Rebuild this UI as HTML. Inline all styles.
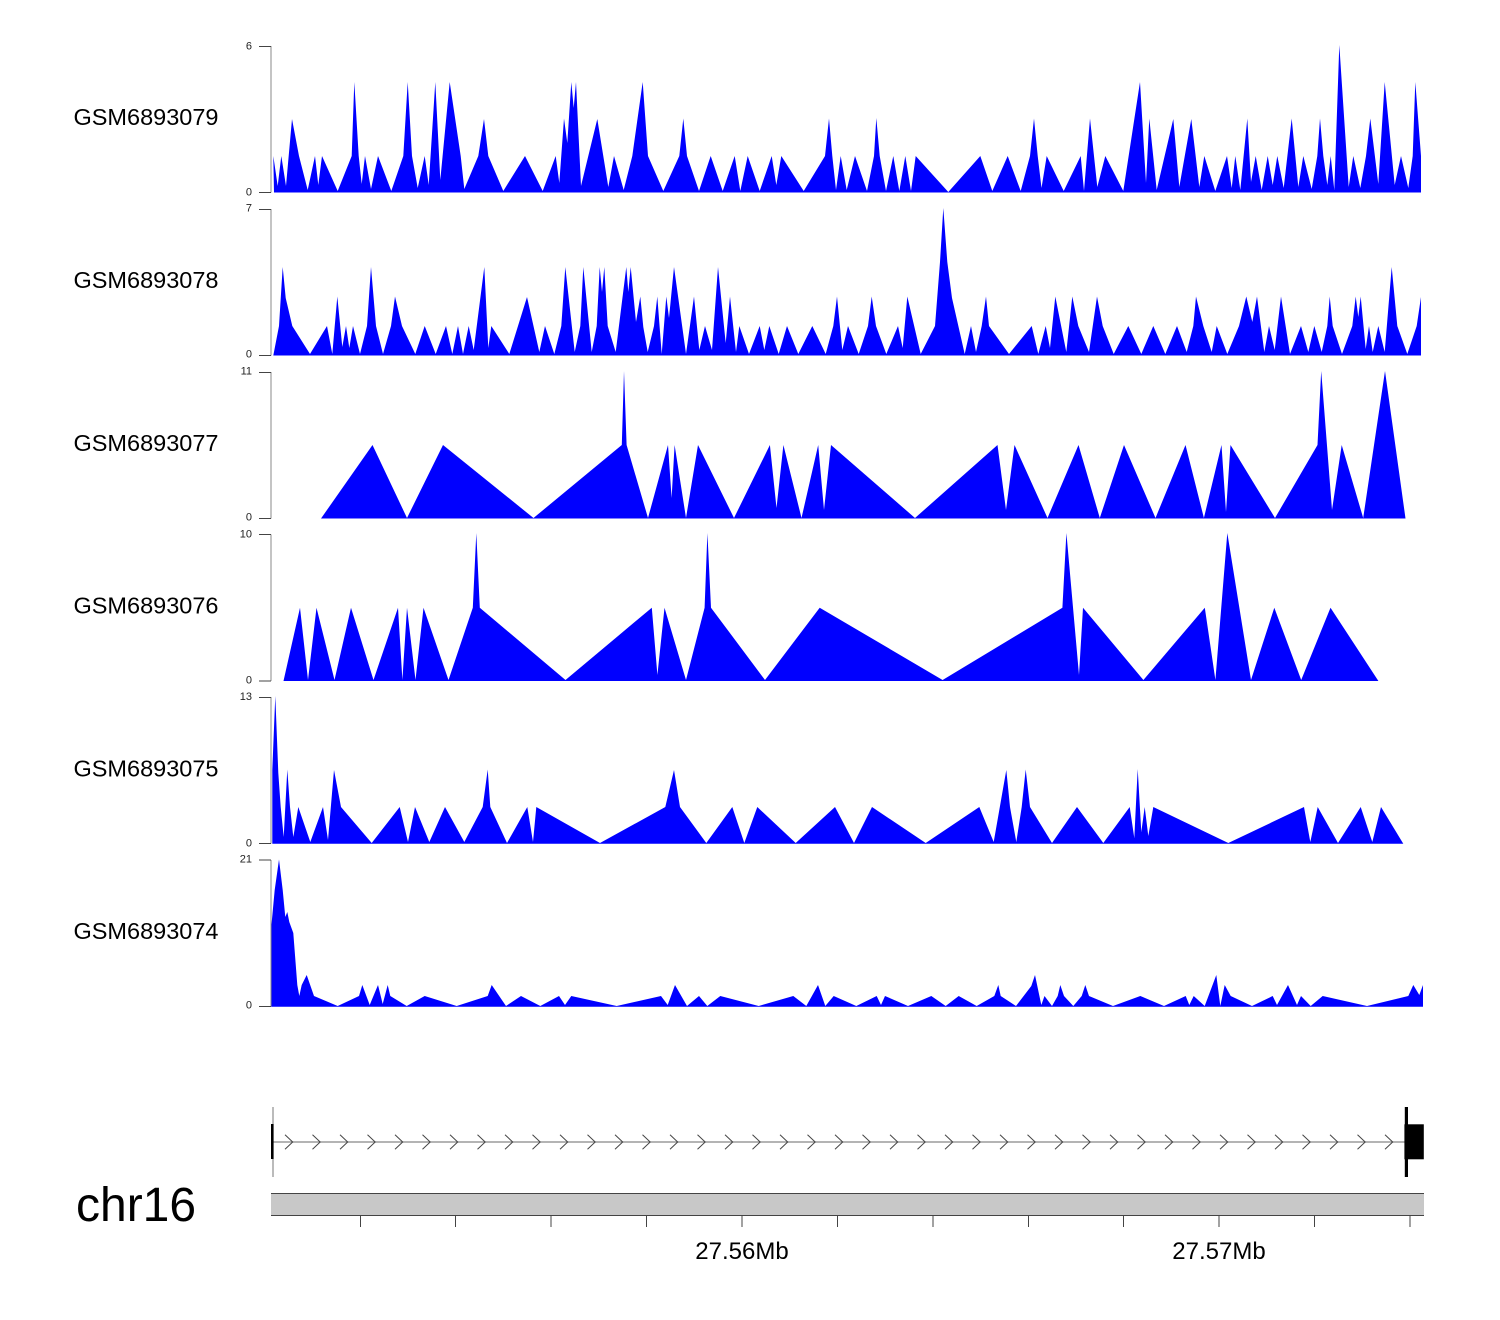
<!DOCTYPE html>
<html><head><meta charset="utf-8"><style>
html,body{margin:0;padding:0;background:#fff;width:1500px;height:1320px;overflow:hidden}
svg{display:block}
text{font-family:"Liberation Sans",Arial,sans-serif;fill:#000}
.s{font-size:11px;text-anchor:end;fill:#222}
.l{font-size:23.5px;text-anchor:end}
.a{font-size:24px;text-anchor:middle}
</style></head><body>
<svg width="1500" height="1320" viewBox="0 0 1500 1320" xmlns="http://www.w3.org/2000/svg">
<rect width="1500" height="1320" fill="#fff"/>
<g fill="#0000ff">
<polygon points="274,192.5 273.3,156 277.7,186 281.3,156 286,186 292,119 299,156 307.7,190 315,156 318.3,185 322,156 337.7,191 351.7,156 354.3,82 358.7,156 361.7,184 365,156 371,189 378,156 391.3,191 403.3,156 407.7,82 412,156 417.7,188 424.7,156 428.7,185 435.3,82 440.3,180 449.7,82 460.7,156 464.3,189 478.3,156 484,119 488.3,156 503.3,191 525,156 542.7,191 555.7,156 559.3,183 564,118.5 567.3,143 571.3,82 573.7,108 576,82 581,186 597.3,119 608.3,187 614,156 623.7,190 632.3,156 642.7,82 648,156 663.3,191 679.3,156 683.3,118.5 687,156 699,191 710.7,156 722.7,191 734.7,156 740.3,191 747.7,156 759.7,191 771.7,156 776.3,185 781.3,156 803.7,191 825,156 829,118.5 832.3,156 836,190 840.7,156 846.7,190 855,156 867,191 874,156 876.3,118 879.7,156 886,191 893.3,156 899.3,191 905.3,156 911,191 915.7,156 948.3,192 980.3,156 992.3,191 1007.7,156 1020.7,191 1030,156 1034,118.5 1037.7,156 1041.5,188 1046.7,156 1063.7,191 1080.7,156 1084,191 1090,118.5 1097.3,187 1105.3,156 1123.3,191 1140,82 1146,183 1149.3,118.5 1156.7,190 1173.3,119 1179.3,187 1191.3,119 1199.3,187 1204.3,156 1215.3,191 1227,156 1231.7,188 1235.3,156 1240.3,190 1247.3,118.5 1251,182 1255.7,156 1261.7,190 1267.7,156 1272.7,185 1277.3,156 1283.7,188 1291.7,118.5 1298.3,187 1303.3,156 1311.7,189 1317.3,156 1320,118.5 1323.3,156 1327.3,185 1330.7,156 1334.3,190 1339.3,45 1348.7,187 1353.3,156 1360.3,188 1366,156 1370.3,118.5 1378.3,184 1384.7,82 1394.7,185 1401,156 1408.3,188 1412.7,156 1415.3,82 1421,156 1421,192.5"/>
<polygon points="273.3,355.5 279,326 282.7,267 285.7,298 292.3,326 310,354 327,326 332.3,354 337.3,296.5 342.3,347 346,326 349.3,348 353,326 360,354 367,326 371,267 376,326 383,354 391,326 395,296.5 402,326 415.3,354 424.7,326 435.7,354 446,326 452.3,354 458,326 463,354 468.7,326 473.7,350 484.3,267 488.3,348 491.3,326 509.3,354 527,297 539.3,352 545,326 554.3,354 561.3,326 565.3,267 574.7,352 580.3,326 583.3,267 591.7,352 596.7,326 599.7,267 602,292 604.3,267 607.7,326 615.7,352 626.3,267 628.3,292 630.7,267 636,322 640.3,296.5 643.3,327 647.7,352 654,326 657.3,296.5 661.7,354 666.3,296.5 669,318 674,267 686,354 694,296.5 699.3,350 705,326 712,350 718,267 725.7,343 730,296.5 736,352 739.3,326 749,354 759.7,326 764.3,350 769.3,326 778.7,354 787,326 798.3,354 812.3,326 825.7,354 833.3,326 837,296.5 842.3,350 848,326 858.7,354 868,326 871.7,296.5 876,326 886.3,354 898,326 902.7,348 907.3,296.5 920.7,354 935,326 940,262 943.3,208 947.3,262 952,298 964.7,354 971,326 976,352 981.7,326 986,296.5 989,326 1009,354 1031.7,326 1038.3,354 1045.7,326 1050,348 1055.3,296.5 1066.3,352 1072.3,296.5 1078.3,326 1089,352 1097,296.5 1102.7,326 1113.7,354 1128.3,326 1141.3,354 1153.3,326 1165.3,354 1177,326 1186.7,352 1193.3,326 1196,296.5 1203.3,326 1211.7,352 1216.7,326 1227.3,354 1239,326 1246.3,296.5 1252.3,322 1257,296.5 1264.3,352 1269,326 1274.7,350 1281,296.5 1290,354 1301,326 1308.3,352 1314.3,326 1321.7,352 1327.3,326 1329.7,296.5 1332.7,326 1342,354 1352.3,326 1355.7,296.5 1358.3,317 1360.7,296.5 1365.7,349 1369,326 1372.7,352 1378.3,326 1384.7,352 1391.7,267 1397.3,326 1407.3,354 1416.7,326 1421,297 1421,355.5"/>
<polygon points="321,518.5 372.5,445 407,518 443,445 533.5,518 621.8,445 624,371 626.6,445 648,518 668,445 671.6,498 674.6,445 686,518 698,445 734,518 769.9,445 776.5,508 783.4,445 801.5,518 818.2,445 824,510 831,445 915,518 997.5,445 1006,510 1014.5,445 1047.5,518 1078.5,445 1099.8,518 1124,445 1155.5,518 1185.5,445 1203.9,518 1221.5,445 1226,512 1230.5,445 1275,518 1317.5,445 1321.2,371 1332,510 1341.7,445 1363.2,518 1385,371 1405.5,518.5"/>
<polygon points="283.5,681 300,607.7 308,680 316.5,607.7 334.5,680 351,607.7 373.5,680 398,607.7 402.4,680 407,607.7 415.5,680 423.5,607.7 448.5,680 472.8,607.7 476.3,533 479.8,607.7 565.5,680 651.8,607.7 657.4,675 664.5,607.7 686,680 704.6,607.7 707.4,533 711,607.7 765,680 819.7,607.7 942.6,680 1062.4,607.7 1066.4,533 1079,675 1083,607.7 1143.4,680 1204.8,607.7 1215.4,680 1227.3,533 1251,680 1274.3,607.7 1301.2,680 1330.5,607.7 1378.4,681"/>
<polygon points="272.3,843.7 272.3,770 275.3,696 278.3,773 280.7,807 283.7,837 287.3,769.5 290,807 293.3,837 298.3,807 310.3,842 323,807 328,840 334,770 341,807 371.7,843 399.7,807 408,842 415,807 429.3,842 445,807 464.3,842 482.7,807 487.7,769.5 490.3,807 507,843 527.3,807 533,842 536.3,807 600,843 665.3,807 674,770 680,807 706.3,843 732.3,807 744.3,843 757.3,807 795.7,843 835,807 854,843 872,807 925.7,843 979.3,807 993.7,842 1006.3,770 1010,807 1016.3,842 1021.7,807 1025.7,769.5 1030,807 1052,843 1077,807 1103.3,843 1129.7,807 1134.3,838 1137.7,769 1141.3,832 1144.7,807 1148.3,836 1153.3,807 1228.3,843 1304,807 1310.3,842 1317.7,807 1338,843 1360.7,807 1372.3,842 1381,807 1403.3,843.7"/>
<polygon points="270.7,1006.7 270.7,933 274.7,890 279,859.5 282.7,890 285.3,917 287.3,912 289.3,922 293.3,933 297.3,985 299.3,996 301.7,985 306.7,975 314,996 337.7,1006 359,996 362.3,985 369.7,1005 378,985 382.7,1004 387.7,985 390.3,996 406.7,1006 424.7,996 456.7,1006 487.7,996 491.7,985 506,1006 521,996 540.3,1006 559,996 565,1005 571.3,996 616.7,1006 661,996 667.7,1005 675,985 687,1006 699,996 707.3,1006 720.3,996 758.7,1006 793.3,996 806.3,1006 818,985 825.3,1006 833.7,996 856.3,1006 876.7,996 881,1005 885,996 908,1006 931.3,996 945.7,1006 958.7,996 976.7,1006 994.3,996 998.3,985 1000.7,996 1016,1006 1031.3,986 1035,975 1041.3,1005 1044.5,996 1052,1006 1057.7,996 1060.3,985 1064,996 1073.3,1006 1081.7,996 1085.3,985 1089,996 1113,1006 1140.3,996 1164,1006 1185.7,996 1189.3,1005 1193.7,996 1204.7,1006 1216.3,975 1220.3,1006 1224.7,985 1230.7,996 1252,1006 1272.7,996 1277,1005 1288,985 1297,1005 1301,996 1310.7,1006 1322.7,996 1367,1006 1408.3,996 1413.3,985 1419.3,995 1423,985 1423,1006.7"/>
</g>
<g stroke="#888" stroke-width="1" fill="none">
<path d="M271 46V192.5M271 209V355.5M271 372V518.5M271 534.5V681M271 697V843.5M271 860V1006.5"/>
</g>
<g stroke="#444" stroke-width="1" fill="none">
<path d="M259 46.5H271M259 192.5H271M259 209.5H271M259 355.5H271M259 372.5H271M259 518.5H271M259 534.5H271M259 681H271M259 697.5H271M259 843.5H271M259 860H271M259 1006.5H271"/>
</g>
<g>
<text class="s" x="252" y="49.5">6</text><text class="s" x="252" y="195.5">0</text>
<text class="s" x="252" y="211.5">7</text><text class="s" x="252" y="357.5">0</text>
<text class="s" x="252" y="374.5">11</text><text class="s" x="252" y="520.5">0</text>
<text class="s" x="252" y="537.5">10</text><text class="s" x="252" y="683.5">0</text>
<text class="s" x="252" y="700">13</text><text class="s" x="252" y="846.5">0</text>
<text class="s" x="252" y="862.5">21</text><text class="s" x="252" y="1008.5">0</text>
<text class="l" x="218.5" y="125">GSM6893079</text>
<text class="l" x="218.5" y="288">GSM6893078</text>
<text class="l" x="218.5" y="451">GSM6893077</text>
<text class="l" x="218.5" y="613.5">GSM6893076</text>
<text class="l" x="218.5" y="776.5">GSM6893075</text>
<text class="l" x="218.5" y="939">GSM6893074</text>
</g>
<path d="M273 1142H1405" stroke="#888" stroke-width="1.2" fill="none"/>
<path d="M273 1107V1177" stroke="#777" stroke-width="1" fill="none"/>
<rect x="271" y="1124" width="2.6" height="35" fill="#000"/>
<rect x="1404.8" y="1107" width="3.2" height="70" fill="#000"/>
<rect x="1404.4" y="1124.3" width="19.4" height="35" fill="#000"/>
<g stroke="#444" stroke-width="1" fill="none">
<path d="M285 1134.7L292.7 1142L285 1149.3M312.5 1134.7L320.2 1142L312.5 1149.3M340 1134.7L347.7 1142L340 1149.3M367.5 1134.7L375.2 1142L367.5 1149.3M395 1134.7L402.7 1142L395 1149.3M422.5 1134.7L430.2 1142L422.5 1149.3M450 1134.7L457.7 1142L450 1149.3M477.5 1134.7L485.2 1142L477.5 1149.3M505 1134.7L512.7 1142L505 1149.3M532.5 1134.7L540.2 1142L532.5 1149.3M560 1134.7L567.7 1142L560 1149.3M587.5 1134.7L595.2 1142L587.5 1149.3M615 1134.7L622.7 1142L615 1149.3M642.5 1134.7L650.2 1142L642.5 1149.3M670 1134.7L677.7 1142L670 1149.3M697.5 1134.7L705.2 1142L697.5 1149.3M725 1134.7L732.7 1142L725 1149.3M752.5 1134.7L760.2 1142L752.5 1149.3M780 1134.7L787.7 1142L780 1149.3M807.5 1134.7L815.2 1142L807.5 1149.3M835 1134.7L842.7 1142L835 1149.3M862.5 1134.7L870.2 1142L862.5 1149.3M890 1134.7L897.7 1142L890 1149.3M917.5 1134.7L925.2 1142L917.5 1149.3M945 1134.7L952.7 1142L945 1149.3M972.5 1134.7L980.2 1142L972.5 1149.3M1000 1134.7L1007.7 1142L1000 1149.3M1027.5 1134.7L1035.2 1142L1027.5 1149.3M1055 1134.7L1062.7 1142L1055 1149.3M1082.5 1134.7L1090.2 1142L1082.5 1149.3M1110 1134.7L1117.7 1142L1110 1149.3M1137.5 1134.7L1145.2 1142L1137.5 1149.3M1165 1134.7L1172.7 1142L1165 1149.3M1192.5 1134.7L1200.2 1142L1192.5 1149.3M1220 1134.7L1227.7 1142L1220 1149.3M1247.5 1134.7L1255.2 1142L1247.5 1149.3M1275 1134.7L1282.7 1142L1275 1149.3M1302.5 1134.7L1310.2 1142L1302.5 1149.3M1330 1134.7L1337.7 1142L1330 1149.3M1357.5 1134.7L1365.2 1142L1357.5 1149.3M1385 1134.7L1392.7 1142L1385 1149.3"/>
</g>
<rect x="271" y="1193" width="1153" height="22.5" fill="#c8c8c8"/>
<path d="M271 1193.5H1424M271 1215.5H1424" stroke="#444" stroke-width="1" fill="none"/>
<path d="M360.5 1215V1227M455.5 1215V1227M551 1215V1227M646.5 1215V1227M742 1215V1227M837.5 1215V1227M933 1215V1227M1028.5 1215V1227M1123.5 1215V1227M1219 1215V1227M1314.5 1215V1227M1410 1215V1227" stroke="#444" stroke-width="1" fill="none"/>
<text class="a" x="742" y="1259">27.56Mb</text>
<text class="a" x="1219" y="1259">27.57Mb</text>
<text x="76" y="1221" font-size="48">chr16</text>
</svg>
</body></html>
